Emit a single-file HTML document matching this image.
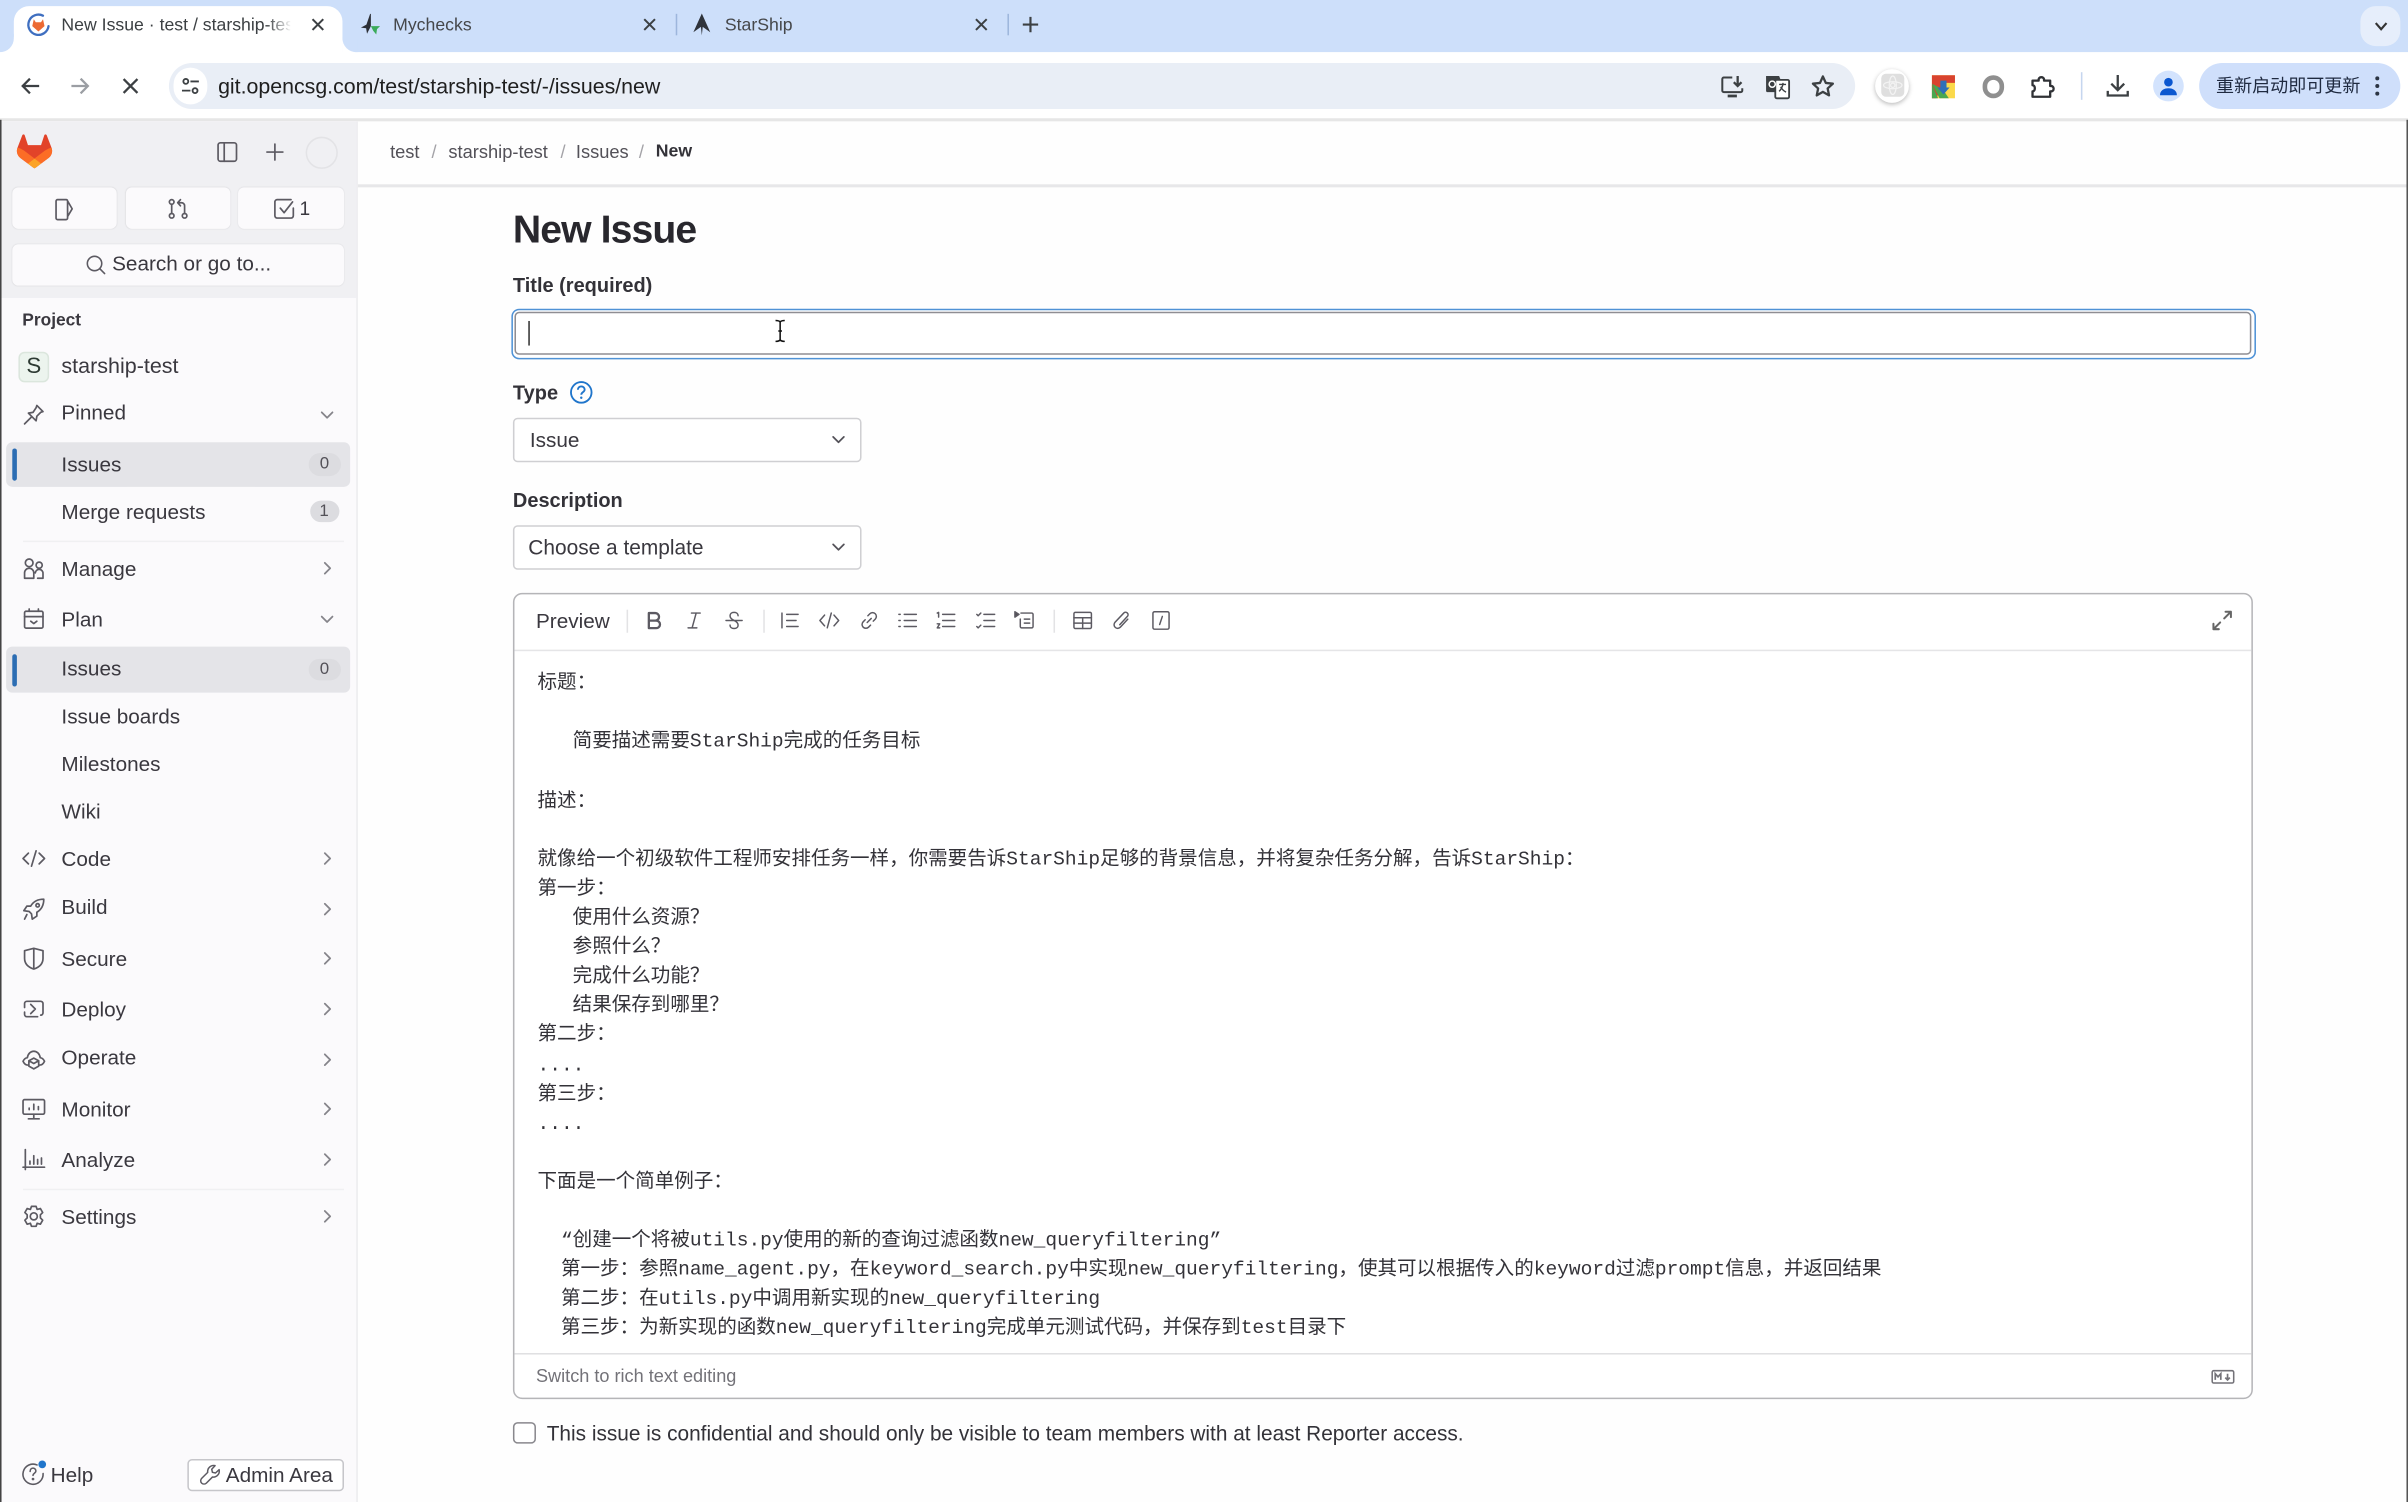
<!DOCTYPE html>
<html lang="en"><head><meta charset="utf-8"><title>New Issue</title>
<style>
html,body{margin:0;padding:0;width:2408px;height:1502px;overflow:hidden;background:#fefefe}
#r{position:absolute;left:0;top:0;width:1568px;height:978px;transform:scale(1.535714,1.535787);transform-origin:0 0;overflow:hidden;font-family:"Liberation Sans","Noto Sans CJK SC",sans-serif;color:#333238;filter:blur(.25px)}
.b{position:absolute;box-sizing:border-box}
.t{position:absolute;white-space:nowrap;line-height:20px;height:20px}
svg{position:absolute;overflow:visible}
.i{fill:none;stroke:#5c5a62;stroke-width:1.1;stroke-linecap:round;stroke-linejoin:round}
.n{font-size:13.5px;left:40px;color:#3a383f;margin-top:.7px}
.c{fill:none;stroke:#85848a;stroke-width:1.15;stroke-linecap:round;stroke-linejoin:round}
.bd{position:absolute;background:#dcdce0;border-radius:8px;height:14.5px;line-height:14.5px;font-size:11px;text-align:center;color:#535158}
.ch{font-size:11.5px;color:#3c4043}
pre{position:absolute;margin:0;left:350px;top:435.3px;font:12.73px/19.09px "Liberation Mono","Noto Sans CJK SC",monospace;color:#333238}
</style></head><body><div id="r">

<!-- tab strip -->
<div class="b" style="left:0;top:0;width:1568px;height:34px;background:#cddffa"></div>
<div class="b" style="left:9px;top:4px;width:214px;height:32px;background:#fff;border-radius:10px 10px 0 0"></div>
<div class="b" style="left:0;top:24px;width:10px;height:12px;background:#fff"></div>
<div class="b" style="left:0;top:22px;width:9px;height:12px;background:#cddffa;border-radius:0 0 9px 0"></div>
<div class="b" style="left:223px;top:26px;width:8px;height:10px;background:#fff"></div>
<div class="b" style="left:223px;top:24px;width:10px;height:10px;background:#cddffa;border-radius:0 0 0 9px"></div>
<svg style="left:17px;top:8px" width="16" height="16" viewBox="0 0 16 16"><path d="M11 2.2A6.6 6.6 0 1 0 14.6 9" fill="none" stroke="#3f6fc0" stroke-width="1.5" stroke-linecap="round"/><path d="M5 4.5l1.3 2h3.4l1.3-2 1 4.5L8 12.5 4 9z" fill="#ec6a34"/></svg>
<div class="t ch" style="left:40px;top:7px;width:149px;overflow:hidden">New Issue · test / starship-test</div>
<div class="b" style="left:174px;top:8px;width:16px;height:16px;background:linear-gradient(90deg,rgba(255,255,255,0),#fff)"></div>
<svg style="left:203px;top:12px" width="8" height="8" viewBox="0 0 8 8"><path d="M.5.5l7 7M7.5.5l-7 7" stroke="#3c4043" stroke-width="1.3"/></svg>
<svg style="left:233px;top:8px" width="16" height="16" viewBox="0 0 16 16"><path d="M8 1L5.6 8 2 10l3.4.4L6 14l2.5-5V1z" fill="#2b2f36"/><path d="M8.5 9h6l-2 2-.5 3.5L10 12z" fill="#3bab5b"/></svg>
<div class="t ch" style="left:256px;top:7px;color:#45474a">Mychecks</div>
<svg style="left:419px;top:12px" width="8" height="8" viewBox="0 0 8 8"><path d="M.5.5l7 7M7.5.5l-7 7" stroke="#3c4043" stroke-width="1.3"/></svg>
<div class="b" style="left:440px;top:9px;width:1px;height:14px;background:#9db6dc"></div>
<svg style="left:449px;top:8px" width="16" height="16" viewBox="0 0 16 16"><path d="M8 .8L13.5 13 8.6 9.5 8 15l-.6-5.5L2.5 13z" fill="#2f333a"/></svg>
<div class="t ch" style="left:472px;top:7px;color:#45474a">StarShip</div>
<svg style="left:635px;top:12px" width="8" height="8" viewBox="0 0 8 8"><path d="M.5.5l7 7M7.5.5l-7 7" stroke="#3c4043" stroke-width="1.3"/></svg>
<div class="b" style="left:656px;top:9px;width:1px;height:14px;background:#9db6dc"></div>
<svg style="left:666px;top:11px" width="10" height="10" viewBox="0 0 10 10"><path d="M5 0v10M0 5h10" stroke="#3c4043" stroke-width="1.4"/></svg>
<div class="b" style="left:1537px;top:4px;width:26px;height:26px;background:#e6eefb;border-radius:10px"></div>
<svg style="left:1546px;top:14px" width="9" height="6" viewBox="0 0 9 6"><path d="M1 1l3.5 4L8 1" fill="none" stroke="#333" stroke-width="1.4"/></svg>

<!-- toolbar -->
<div class="b" style="left:0;top:34px;width:1568px;height:43px;background:#fff"></div>
<div class="b" style="left:0;top:77px;width:1568px;height:1.5px;background:#e6e6e6"></div>
<svg style="left:14px;top:50px" width="12" height="12" viewBox="0 0 12 12"><path d="M11.5 6H1M5.5 1.2L.8 6l4.7 4.8" fill="none" stroke="#3c4043" stroke-width="1.5"/></svg>
<svg style="left:46px;top:50px" width="12" height="12" viewBox="0 0 12 12"><path d="M.5 6H11M6.5 1.2L11.2 6l-4.7 4.8" fill="none" stroke="#9b9ea3" stroke-width="1.5"/></svg>
<svg style="left:80px;top:51px" width="10" height="10" viewBox="0 0 10 10"><path d="M.5.5l9 9M9.5.5l-9 9" stroke="#3c4043" stroke-width="1.5"/></svg>
<div class="b" style="left:110px;top:41px;width:1098px;height:30px;background:#e9eef6;border-radius:15px"></div>
<div class="b" style="left:113px;top:44px;width:22px;height:24px;background:#fff;border-radius:12px"></div>
<svg style="left:118px;top:50px" width="12" height="12" viewBox="0 0 12 12"><g fill="none" stroke="#3c4043" stroke-width="1.2"><circle cx="3" cy="3" r="1.6"/><circle cx="9" cy="9" r="1.6"/><path d="M6 3h5.5M.5 9H6"/></g></svg>
<div class="t" style="left:142px;top:46px;font-size:13.9px;color:#1f1f1f">git.opencsg.com/test/starship-test/-/issues/new</div>
<svg style="left:1120px;top:48px" width="16" height="16" viewBox="0 0 16 16"><g fill="none" stroke="#3c4043" stroke-width="1.3"><path d="M8 2.5H2.5a1 1 0 0 0-1 1v7.5a1 1 0 0 0 1 1h11a1 1 0 0 0 1-1V9.5"/><path d="M5 14.5h6" stroke-width="1.8"/><path d="M11.5 1.5v6M9 5.5L11.5 8 14 5.5" stroke-width="1.5"/></g></svg>
<svg style="left:1149px;top:48px" width="17" height="17" viewBox="0 0 17 17"><path d="M1 1.5h8.5l1 2.5v8H2a1 1 0 0 1-1-1z" fill="#3c4043"/><rect x="7" y="4" width="9" height="12" rx="1" fill="#fff" stroke="#3c4043" stroke-width="1.2"/><path d="M9.5 7h4.5M12 6v1c-.5 2-1.5 3.5-2.5 4.5M10.5 8.5c.8 1.5 2 2.7 3.5 3.5" fill="none" stroke="#3c4043" stroke-width=".9"/><circle cx="5" cy="6.8" r="2" fill="none" stroke="#fff" stroke-width="1"/></svg>
<svg style="left:1179px;top:48px" width="16" height="16" viewBox="0 0 16 16"><path d="M8 1.8l1.9 4.2 4.6.5-3.4 3.1.9 4.5L8 11.8l-4 2.3.9-4.5L1.5 6.5l4.6-.5z" fill="none" stroke="#3c4043" stroke-width="1.5" stroke-linejoin="round"/></svg>

<div class="b" style="left:1221px;top:45px;width:22px;height:22px;background:#fff;border-radius:50%;box-shadow:0 1px 3px rgba(0,0,0,.28)"></div>
<div class="b" style="left:1225px;top:48px;width:15px;height:15px;background:#dfdfdf;border-radius:3px"></div>
<svg style="left:1225px;top:48px" width="15" height="15" viewBox="0 0 15 15"><g fill="none" stroke="#f3f3f3" stroke-width=".8"><ellipse cx="7.5" cy="7.5" rx="6" ry="2.3"/><ellipse cx="7.5" cy="7.5" rx="2.3" ry="6"/><circle cx="7.5" cy="7.5" r="1.4"/></g></svg>
<svg style="left:1258px;top:49px" width="15" height="15" viewBox="0 0 15 15"><rect width="15" height="15" fill="#fbd94a"/><path d="M0 0h15v5H7L3 15H0z" fill="#d9432f"/><path d="M0 5.5l5 9.5h6L7 9z" fill="#4aa84f"/><path d="M0 15V6l4 9z" fill="#4aa84f"/><path d="M5.5 3.5h4v4.5h2L7.5 12.5 3.500 8h2z" fill="#2f6fb8"/></svg>
<div class="b" style="left:1290.5px;top:49px;width:14.5px;height:14.5px;border:3.5px solid #8f8f8f;border-radius:50%"></div>
<svg style="left:1322px;top:47.5px" width="17" height="17" viewBox="0 0 17 17"><path d="M1.5 4.5h4c-.5-3 4-3 3.500 0h4v3.500c3-.5 3 4 0 3.500v3.500h-11.500v-3.500c0 0 1.500 0 1.500-2s-1.500-2-1.500-2z" fill="none" stroke="#303236" stroke-width="1.5" stroke-linejoin="round"/></svg>
<div class="b" style="left:1355px;top:47px;width:1px;height:18px;background:#c6d6ef"></div>
<svg style="left:1371px;top:48px" width="16" height="16" viewBox="0 0 16 16"><path d="M8 .8v9.5M3.800 6.500L8 10.700l4.200-4.200M1.500 11.200v3h13v-3" fill="none" stroke="#3c4043" stroke-width="1.5"/></svg>
<div class="b" style="left:1402px;top:46px;width:20px;height:20px;background:#d3e3fd;border-radius:50%"></div>
<svg style="left:1404px;top:48px" width="16" height="16" viewBox="0 0 16 16"><circle cx="8" cy="5.5" r="2.8" fill="#0b57d0"/><path d="M2.5 14c0-3 2.500-4.500 5.500-4.500s5.500 1.500 5.500 4.500z" fill="#0b57d0"/></svg>
<div class="b" style="left:1432px;top:41px;width:131px;height:30px;background:#cfdffb;border-radius:15px"></div>
<div class="t" style="left:1443px;top:46.5px;font-size:11.75px;color:#1f2a40">重新启动即可更新</div>
<svg style="left:1546px;top:49px" width="4" height="14" viewBox="0 0 4 14"><g fill="#2b3443"><circle cx="2" cy="2" r="1.3"/><circle cx="2" cy="7" r="1.3"/><circle cx="2" cy="12" r="1.3"/></g></svg>

<!-- sidebar -->
<div class="b" style="left:0;top:78.5px;width:233px;height:900px;background:#fbfafc;border-right:1px solid #ececef"></div>
<div class="b" style="left:0;top:78.5px;width:232px;height:115px;background:#f0f0f3"></div>
<div class="b" style="left:0;top:78px;width:.7px;height:900px;background:#444"></div>
<svg style="left:11px;top:87px" width="23" height="23" viewBox="0 0 25 24"><path d="m24.507 9.5-.034-.09L21.082.562a.896.896 0 0 0-1.694.091l-2.29 7.01H7.825L5.535.653a.898.898 0 0 0-1.694-.09L.451 9.411.416 9.5a6.297 6.297 0 0 0 2.09 7.278l.012.01.03.022 5.16 3.867 2.56 1.935 1.554 1.176a1.051 1.051 0 0 0 1.268 0l1.555-1.176 2.56-1.935 5.197-3.89.014-.01A6.297 6.297 0 0 0 24.507 9.5Z" fill="#E24329"/><path d="m24.507 9.5-.034-.09a11.44 11.44 0 0 0-4.56 2.051l-7.447 5.632 4.742 3.584 5.197-3.89.014-.01A6.297 6.297 0 0 0 24.507 9.5Z" fill="#FC6D26"/><path d="m7.707 20.677 2.56 1.935 1.555 1.176a1.051 1.051 0 0 0 1.268 0l1.555-1.176 2.56-1.935-4.743-3.584-4.755 3.584Z" fill="#FCA326"/><path d="M5.01 11.461a11.43 11.43 0 0 0-4.56-2.05L.416 9.5a6.297 6.297 0 0 0 2.09 7.278l.012.01.03.022 5.16 3.867 4.745-3.584-7.444-5.632Z" fill="#FC6D26"/></svg>
<svg class="i" style="left:140px;top:91px" width="16" height="16" viewBox="0 0 16 16"><rect x="2" y="2" width="12" height="12" rx="1.5"/><path d="M6 2v12"/></svg>
<svg class="i" style="left:173px;top:93px" width="12" height="12" viewBox="0 0 12 12"><path d="M6 .8v10.4M.8 6h10.4"/></svg>
<div class="b" style="left:199px;top:89px;width:21px;height:21px;border:1px solid #e3e3e6;border-radius:50%"></div>

<div class="b" style="left:8px;top:121.5px;width:68px;height:27.5px;background:#fbfafc;border-radius:4px;box-shadow:0 0 1px rgba(0,0,0,.1)"></div>
<div class="b" style="left:81.5px;top:121.5px;width:68px;height:27.5px;background:#fbfafc;border-radius:4px;box-shadow:0 0 1px rgba(0,0,0,.1)"></div>
<div class="b" style="left:155px;top:121.5px;width:68.5px;height:27.5px;background:#fbfafc;border-radius:4px;box-shadow:0 0 1px rgba(0,0,0,.1)"></div>
<div class="b" style="left:8px;top:158.5px;width:215.5px;height:27px;background:#fbfafc;border-radius:4px;box-shadow:0 0 1px rgba(0,0,0,.1)"></div>
<svg class="i" style="left:34px;top:127.5px" width="16" height="16" viewBox="0 0 16 16"><path d="M2.5 3a1 1 0 0 1 1-1h5.5a1 1 0 0 1 1 .8l3 5.200-3 5v1a1 1 0 0 1-1 1H3.500a1 1 0 0 1-1-1zM10 3v10"/></svg>
<svg class="i" style="left:107.5px;top:127.5px" width="16" height="16" viewBox="0 0 16 16"><circle cx="3.8" cy="3.5" r="1.5"/><circle cx="3.8" cy="12.5" r="1.5"/><circle cx="12.2" cy="12.5" r="1.5"/><path d="M3.8 5v6M12.2 11V6a2 2 0 0 0-2-2H8M9.5 2L7.7 4l1.8 2"/></svg>
<svg class="i" style="left:177px;top:127.5px" width="16" height="16" viewBox="0 0 16 16"><path d="M14 7.5V12.5a1.5 1.5 0 0 1-1.5 1.500h-9A1.500 1.500 0 0 1 2 12.500v-9A1.500 1.500 0 0 1 3.500 2H12.500M5.500 7.500L8 10.500l5.500-7"/></svg>
<div class="t" style="left:195px;top:125.5px;font-size:12.5px;color:#3a383f">1</div>
<svg class="i" style="left:54.5px;top:164.5px" width="15" height="15" viewBox="0 0 16 16"><circle cx="7" cy="7" r="5"/><path d="M10.8 10.8L14 14"/></svg>
<div class="t" style="left:73px;top:162px;font-size:13.5px;color:#3a383f">Search or go to...</div>

<div class="t" style="left:14.5px;top:199px;font-size:11.3px;font-weight:bold;color:#3a383f">Project</div>
<div class="b" style="left:12px;top:229px;width:20px;height:20px;background:#ecf4ee;border:1px solid #dbe6dd;border-radius:4px;text-align:center;font-size:14.5px;line-height:18px;color:#2d3a33">S</div>
<div class="t n" style="top:227.5px;font-size:14px">starship-test</div>

<svg class="i" style="left:13.5px;top:261.5px" width="16" height="16" viewBox="0 0 16 16"><path d="M10 2l4 4-1.500.5L10 9l-.5 3L4.500 7l3-.5L9.500 3.500zM6.500 9.500L2 14"/></svg>
<div class="t n" style="top:258.8px">Pinned</div>
<svg class="c" style="left:209px;top:267.5px" width="8" height="5" viewBox="0 0 8 5"><path d="M.5.5L4 4 7.500.5"/></svg>

<div class="b" style="left:4px;top:287.5px;width:224px;height:29.5px;background:#e4e4e8;border-radius:4px"></div>
<div class="b" style="left:7.5px;top:292px;width:3px;height:21px;background:#2c6db3;border-radius:2px"></div>
<div class="t n" style="top:292px">Issues</div>
<div class="bd" style="left:200.5px;top:295px;width:21.5px">0</div>
<div class="t n" style="top:323px">Merge requests</div>
<div class="bd" style="left:201.5px;top:325.5px;width:19px">1</div>
<div class="b" style="left:14.5px;top:352px;width:209px;height:1px;background:#f0f0f2"></div>

<svg class="i" style="left:13.5px;top:362px" width="16" height="16" viewBox="0 0 16 16"><circle cx="5" cy="4.500" r="2.500"/><circle cx="11.500" cy="6" r="2"/><path d="M2 14.500v-3.500a3 3 0 0 1 6 0v3.500zM10.500 14.500h3.500v-3a2.500 2.500 0 0 0-5-.5"/></svg>
<div class="t n" style="top:360px">Manage</div>
<svg class="c" style="left:211px;top:366px" width="5" height="8" viewBox="0 0 5 8"><path d="M.5.5L4 4 .5 7.500"/></svg>
<svg class="i" style="left:13.5px;top:395px" width="16" height="16" viewBox="0 0 16 16"><rect x="2" y="3" width="12" height="11" rx="1"/><path d="M2 6.500h12M5 1.500V3M11 1.500V3M6 9.500l2 1.500 2-1.500"/></svg>
<div class="t n" style="top:393px">Plan</div>
<svg class="c" style="left:209px;top:401px" width="8" height="5" viewBox="0 0 8 5"><path d="M.5.5L4 4 7.500.5"/></svg>

<div class="b" style="left:4px;top:421px;width:224px;height:29.5px;background:#e4e4e8;border-radius:4px"></div>
<div class="b" style="left:7.5px;top:425.5px;width:3px;height:21px;background:#2c6db3;border-radius:2px"></div>
<div class="t n" style="top:425.3px">Issues</div>
<div class="bd" style="left:200.5px;top:428.5px;width:21.5px">0</div>
<div class="t n" style="top:456px">Issue boards</div>
<div class="t n" style="top:487px">Milestones</div>
<div class="t n" style="top:518px">Wiki</div>

<svg class="i" style="left:13.5px;top:551px" width="16" height="16" viewBox="0 0 16 16"><path d="M4.500 4.500L1 8l3.500 3.500M11.500 4.500L15 8l-3.500 3.500M9.500 3l-3 10"/></svg>
<div class="t n" style="top:549px">Code</div>
<svg class="c" style="left:211px;top:555px" width="5" height="8" viewBox="0 0 5 8"><path d="M.5.5L4 4 .5 7.5"/></svg>
<svg class="i" style="left:13.5px;top:583.5px" width="16" height="16" viewBox="0 0 16 16"><path d="M14.500 1.500c-4 0-6.800 1.500-8.500 4.500H3.500L1.500 9l3.500.5 1.500 1.500.5 3.500 3-2v-2.500c3-1.800 4.500-4.500 4.500-8.500z"/><circle cx="10.500" cy="5.500" r="1.100"/><path d="M3.500 11.500l-1.500 3"/></svg>
<div class="t n" style="top:580.8px">Build</div>
<svg class="c" style="left:211px;top:587.5px" width="5" height="8" viewBox="0 0 5 8"><path d="M.5.5L4 4 .5 7.5"/></svg>
<svg class="i" style="left:13.5px;top:616px" width="16" height="16" viewBox="0 0 16 16"><path d="M8 1.500l6 1.500v5c0 3.500-2.500 5.800-6 7-3.500-1.200-6-3.500-6-7V3zM8 1.500V15"/></svg>
<div class="t n" style="top:614px">Secure</div>
<svg class="c" style="left:211px;top:620px" width="5" height="8" viewBox="0 0 5 8"><path d="M.5.5L4 4 .5 7.5"/></svg>
<svg class="i" style="left:13.5px;top:649px" width="16" height="16" viewBox="0 0 16 16"><path d="M2 7V4.500A1.500 1.500 0 0 1 3.500 3h9A1.500 1.500 0 0 1 14 4.500v6a1.500 1.500 0 0 1-1.500 1.500M2 10v1.500A1.500 1.500 0 0 0 3.500 13h7M6 5l3 3-3 3"/></svg>
<div class="t n" style="top:647px">Deploy</div>
<svg class="c" style="left:211px;top:653px" width="5" height="8" viewBox="0 0 5 8"><path d="M.5.5L4 4 .5 7.5"/></svg>
<svg class="i" style="left:13.5px;top:681.5px" width="16" height="16" viewBox="0 0 16 16"><path d="M4 11.500c-1.200 0-2.200-.8-3-2.500.8-1.500 1.700-2.200 2.800-2.300C4.300 4 6 2.500 8 2.500s3.700 1.500 4.200 4.200c1.100.1 2 .8 2.800 2.300-.8 1.700-1.800 2.500-3 2.500M8 7l3.200 1.700v3.500L8 14l-3.200-1.800V8.700zM4.800 8.700L8 10.500l3.200-1.800"/></svg>
<div class="t n" style="top:678.8px">Operate</div>
<svg class="c" style="left:211px;top:685.5px" width="5" height="8" viewBox="0 0 5 8"><path d="M.5.5L4 4 .5 7.5"/></svg>
<svg class="i" style="left:13.5px;top:714px" width="16" height="16" viewBox="0 0 16 16"><rect x="1" y="2" width="14" height="9.500" rx="1"/><path d="M4.500 14.500h7M8 11.500v3M5 8.500V7.500M8 8.500V5M11 8.500V6.500"/></svg>
<div class="t n" style="top:712px">Monitor</div>
<svg class="c" style="left:211px;top:718px" width="5" height="8" viewBox="0 0 5 8"><path d="M.5.5L4 4 .5 7.5"/></svg>
<svg class="i" style="left:13.5px;top:747px" width="16" height="16" viewBox="0 0 16 16"><path d="M2.500 1.500v13M1 13h14M5.500 11V9M8 11V5.500M10.500 11V8M13 11V7"/></svg>
<div class="t n" style="top:745px">Analyze</div>
<svg class="c" style="left:211px;top:751px" width="5" height="8" viewBox="0 0 5 8"><path d="M.5.5L4 4 .5 7.5"/></svg>
<div class="b" style="left:14.5px;top:773.5px;width:209px;height:1px;background:#f0f0f2"></div>
<svg class="i" style="left:13.5px;top:784px" width="16" height="16" viewBox="0 0 16 16"><path d="M6.500 1.500h3l.7 2 2.100-.6 1.500 2.600L12.300 7v2l1.500 1.500-1.500 2.600-2.100-.6-.7 2h-3l-.7-2-2.100.6-1.500-2.600L3.700 9V7L2.200 5.500l1.500-2.600 2.100.6z"/><circle cx="8" cy="8" r="2.300"/></svg>
<div class="t n" style="top:782px">Settings</div>
<svg class="c" style="left:211px;top:788px" width="5" height="8" viewBox="0 0 5 8"><path d="M.5.5L4 4 .5 7.5"/></svg>

<svg class="i" style="left:14px;top:952px" width="15" height="15" viewBox="0 0 16 16"><path d="M10.800 2A7 7 0 1 0 15 8"/><path d="M6 6.500C6 5 7 4.200 8 4.200s2 .8 2 2c0 1.500-2 1.600-2 3"/><circle cx="8" cy="11.800" r=".4"/></svg>
<div class="b" style="left:25px;top:950.5px;width:5px;height:5px;background:#1f75cb;border-radius:50%"></div>
<div class="t" style="left:33px;top:950.5px;font-size:13.5px;color:#3a383f">Help</div>
<div class="b" style="left:122px;top:949.5px;width:102px;height:21px;background:#fff;border:1px solid #c6c6ca;border-radius:3px"></div>
<svg class="i" style="left:129.5px;top:953px" width="14" height="14" viewBox="0 0 16 16"><path d="M14.500 4.500L11.800 7 9.500 6.500 9 4.200l2.500-2.700A4.500 4.500 0 0 0 6 6.500L1.500 11a2.300 2.300 0 0 0 3.500 3.500l4.500-4.500a4.500 4.500 0 0 0 5-5.500z"/></svg>
<div class="t" style="left:147px;top:950.5px;font-size:13.5px;color:#3a383f">Admin Area</div>

<!-- breadcrumb -->
<div class="t" style="left:254px;top:89px;font-size:11.9px;color:#535158">test</div>
<div class="t" style="left:281px;top:89px;font-size:11.9px;color:#a4a3a8">/</div>
<div class="t" style="left:292px;top:89px;font-size:11.9px;color:#535158">starship-test</div>
<div class="t" style="left:365px;top:89px;font-size:11.9px;color:#a4a3a8">/</div>
<div class="t" style="left:375px;top:89px;font-size:11.9px;color:#535158">Issues</div>
<div class="t" style="left:416px;top:89px;font-size:11.9px;color:#a4a3a8">/</div>
<div class="t" style="left:427px;top:89px;font-size:11.5px;font-weight:bold;color:#333238">New</div>
<div class="b" style="left:233px;top:120px;width:1335px;height:1.5px;background:#e7e7e9"></div>

<!-- form -->
<div class="t" style="left:334px;top:139.5px;font-size:25.5px;letter-spacing:-.6px;font-weight:bold;color:#28272d">New Issue</div>
<div class="t" style="left:334px;top:175.5px;font-size:13px;font-weight:bold;color:#333238">Title (required)</div>
<div class="b" style="left:332.5px;top:200.5px;width:1136px;height:33px;border:1.7px solid #4f92d6;border-radius:5px;background:#fff"></div>
<div class="b" style="left:334.8px;top:202.8px;width:1131.4px;height:28.4px;border:1px solid #8f8e93;border-radius:3px;background:#fff"></div>
<div class="b" style="left:344px;top:208.5px;width:1px;height:16px;background:#333"></div>
<svg style="left:504px;top:208px" width="8" height="15" viewBox="0 0 8 15"><path d="M1 .7c1.500 0 2.500.3 3 1 .5-.7 1.500-1 3-1M4 1.700v11.600M1 14.300c1.500 0 2.500-.3 3-1 .5.700 1.500 1 3 1M2.800 7.500h2.400" fill="none" stroke="#111" stroke-width="1"/></svg>

<div class="t" style="left:334px;top:245.5px;font-size:13px;font-weight:bold;color:#333238">Type</div>
<svg style="left:370.5px;top:247.5px" width="15" height="15" viewBox="0 0 15 15"><circle cx="7.5" cy="7.5" r="6.7" fill="none" stroke="#1f75cb" stroke-width="1.2"/><path d="M5.3 5.800c0-1.300 1-2.200 2.200-2.200s2.200.9 2.200 2.100c0 1.600-2.200 1.700-2.200 3.300" fill="none" stroke="#1f75cb" stroke-width="1.2"/><circle cx="7.5" cy="11" r=".8" fill="#1f75cb"/></svg>
<div class="b" style="left:334px;top:272px;width:227px;height:29px;background:#fff;border:1px solid #cfcfd2;border-radius:3px"></div>
<div class="t" style="left:345px;top:276.5px;font-size:13.5px;color:#3a383f">Issue</div>
<svg class="c" style="left:542px;top:284px" width="8" height="5" viewBox="0 0 8 5"><path d="M.5.5L4 4 7.500.5" style="stroke:#535158"/></svg>
<div class="t" style="left:334px;top:315.5px;font-size:13px;font-weight:bold;color:#333238">Description</div>
<div class="b" style="left:334px;top:342px;width:227px;height:29px;background:#fff;border:1px solid #cfcfd2;border-radius:3px"></div>
<div class="t" style="left:344px;top:346.5px;font-size:13.6px;color:#3a383f">Choose a template</div>
<svg class="c" style="left:541.5px;top:354px" width="8" height="5" viewBox="0 0 8 5"><path d="M.5.5L4 4 7.500.5" style="stroke:#535158"/></svg>

<!-- editor -->
<div class="b" style="left:334px;top:385.5px;width:1133px;height:525.5px;background:#fff;border:1.2px solid #b5b5b8;border-radius:6px"></div>
<div class="b" style="left:335px;top:422.5px;width:1131px;height:1px;background:#e5e5e7"></div>
<div class="b" style="left:335px;top:880.5px;width:1131px;height:1px;background:#e0e0e2"></div>
<div class="t" style="left:349px;top:394.8px;font-size:13.5px;color:#3a383f">Preview</div>
<div class="b" style="left:408px;top:397px;width:1px;height:15px;background:#e3e3e5"></div>
<div class="b" style="left:497px;top:397px;width:1px;height:15px;background:#e3e3e5"></div>
<div class="b" style="left:686px;top:397px;width:1px;height:15px;background:#e3e3e5"></div>
<svg class="i" style="left:419px;top:397px" width="14" height="14" viewBox="0 0 16 16"><path d="M4 2.500h4.800a2.800 2.800 0 0 1 0 5.600H4zM4 8.100h5.500a2.800 2.800 0 0 1 0 5.600H4z" stroke-width="1.7"/></svg>
<svg class="i" style="left:445px;top:397px" width="14" height="14" viewBox="0 0 16 16"><path d="M6 2.500h6.500M3.500 13.500H10M9.500 2.500L6.500 13.500"/></svg>
<svg class="i" style="left:470.5px;top:397px" width="14" height="14" viewBox="0 0 16 16"><path d="M2 8h12M11 4.500C11 3 9.800 2 8 2S5 3 5 4.500C5 6 6.300 7.200 8 8c1.700.8 3 2 3 3.500S9.800 14 8 14s-3-1-3-2.500"/></svg>
<svg class="i" style="left:507px;top:397px" width="14" height="14" viewBox="0 0 16 16"><path d="M2.500 2.500v11M6 3.500h8.500M6 8h7M6 12.500h8.500"/></svg>
<svg class="i" style="left:533px;top:397px" width="14" height="14" viewBox="0 0 16 16"><path d="M4.500 4L1 8l3.500 4M11.500 4L15 8l-3.500 4M9.500 2.500l-3 11"/></svg>
<svg class="i" style="left:558.5px;top:397px" width="14" height="14" viewBox="0 0 16 16"><path d="M6.500 9.500l3-3M7 4.500L8.500 3a2.800 2.800 0 0 1 4 4L11 8.500M9 11.500L7.500 13a2.800 2.800 0 0 1-4-4L5 7.500"/></svg>
<svg class="i" style="left:584px;top:397px" width="14" height="14" viewBox="0 0 16 16"><path d="M5.500 3.500H14.500M5.500 8H14.500M5.500 12.500H14.500M1.500 3.500h1M1.500 8h1M1.500 12.500h1"/></svg>
<svg class="i" style="left:609px;top:397px" width="14" height="14" viewBox="0 0 16 16"><path d="M5.500 3.500H14.500M5.500 8H14.500M5.500 12.500H14.500M1.500 2.500l1-.5v3.500M1.500 10.500h1.800l-1.800 3h1.800"/></svg>
<svg class="i" style="left:634.5px;top:397px" width="14" height="14" viewBox="0 0 16 16"><path d="M6.500 3.500H14.500M6.500 8H14.500M6.500 12.500H14.500M1.200 3.500l1 1 2-2M1.200 12.500l1 1 2-2"/></svg>
<svg class="i" style="left:660px;top:397px" width="14" height="14" viewBox="0 0 16 16"><path d="M5.500 2.500h8a1 1 0 0 1 1 1v9a1 1 0 0 1-1 1H6a1 1 0 0 1-1-1V7M8 7h4M8 10h4"/><path d="M1 1.500l3 2-3 2z" fill="#535158"/></svg>
<svg class="i" style="left:698px;top:397px" width="14" height="14" viewBox="0 0 16 16"><rect x="1.500" y="2" width="13" height="12" rx="1"/><path d="M1.500 6h13M1.500 10h13M8 6v8"/></svg>
<svg class="i" style="left:723px;top:397px" width="14" height="14" viewBox="0 0 16 16"><path d="M13 7l-5.500 6a2.700 2.700 0 0 1-4-3.700L10 2.500a1.800 1.800 0 0 1 2.700 2.500L7 11.200"/></svg>
<svg class="i" style="left:748.5px;top:397px" width="14" height="14" viewBox="0 0 16 16"><rect x="2" y="1.500" width="12" height="13" rx="1.200"/><path d="M9 5l-2 6"/></svg>
<svg class="i" style="left:1440px;top:397px" width="14" height="14" viewBox="0 0 16 16"><path d="M9.500 6.500L14.500 1.500M10.500 1.500h4v4M6.500 9.500L1.500 14.500M1.500 10.500v4h4" stroke-width="1.5" style="stroke:#666"/></svg>

<pre>标题：

   简要描述需要StarShip完成的任务目标

描述：

就像给一个初级软件工程师安排任务一样，你需要告诉StarShip足够的背景信息，并将复杂任务分解，告诉StarShip：
第一步：
   使用什么资源？
   参照什么？
   完成什么功能？
   结果保存到哪里？
第二步：
....
第三步：
....

下面是一个简单例子：

  “创建一个将被utils.py使用的新的查询过滤函数new_queryfiltering”
  第一步：参照name_agent.py，在keyword_search.py中实现new_queryfiltering，使其可以根据传入的keyword过滤prompt信息，并返回结果
  第二步：在utils.py中调用新实现的new_queryfiltering
  第三步：为新实现的函数new_queryfiltering完成单元测试代码，并保存到test目录下</pre>

<div class="t" style="left:349px;top:886px;font-size:11.8px;color:#737278">Switch to rich text editing</div>
<svg style="left:1439.5px;top:891.5px" width="15" height="9" viewBox="0 0 15 9"><rect x=".5" y=".5" width="14" height="8" rx="1" fill="#fff" stroke="#737278"/><path d="M2.500 6.500v-4l1.800 2 1.800-2v4M10.500 2.500v4M9 5l1.500 1.500L12 5" fill="none" stroke="#737278" stroke-width="1.1"/></svg>

<div class="b" style="left:334px;top:925.7px;width:14.500px;height:14.500px;background:#fff;border:1px solid #89888d;border-radius:3px"></div>
<div class="t" style="left:356px;top:923.8px;font-size:13.57px;color:#333238">This issue is confidential and should only be visible to team members with at least Reporter access.</div>

<div class="t" style="left:334px;top:974px;font-size:13px;font-weight:bold;color:#333238">Assignee</div>
<div class="t" style="left:915px;top:974px;font-size:13px;font-weight:bold;color:#333238">Due date</div>
<div class="b" style="left:1567px;top:78px;width:1px;height:900px;background:#555"></div>
</div></body></html>
